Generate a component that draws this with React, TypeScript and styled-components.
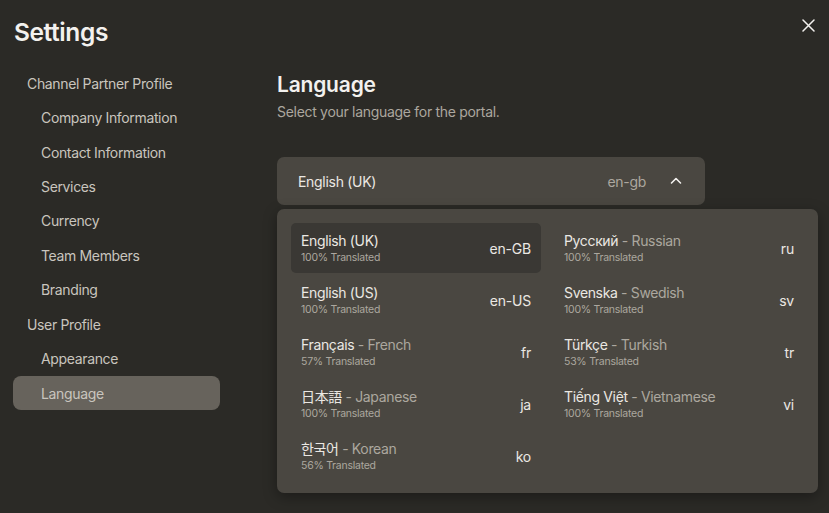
import React from "react";
import styled, { createGlobalStyle } from "styled-components";

const GlobalStyle = createGlobalStyle`
  html, body {
    margin: 0;
    padding: 0;
    background: #2b2a26;
  }
  * {
    box-sizing: border-box;
  }
`;

const Page = styled.div`
  width: 829px;
  height: 513px;
  overflow: hidden;
  background-color: #2b2a26;
  font-family: "Inter", "Noto Sans CJK JP", sans-serif;
  color: #e9e6e1;
  display: flex;
  flex-direction: column;
`;

const Header = styled.div`
  display: flex;
  justify-content: space-between;
  align-items: center;
  padding: 14px 13px 0 14px;
  height: 50px;
`;

const Title = styled.h1`
  margin: 0;
  font-size: 24.5px;
  font-weight: 600;
  color: #f3f1ee;
  letter-spacing: -0.4px;
`;

const CloseButton = styled.button`
  width: 16px;
  height: 16px;
  padding: 0;
  margin-top: -13px;
  border: none;
  background: none;
  display: flex;
  align-items: center;
  justify-content: center;
  cursor: pointer;
`;

const Body = styled.div`
  display: flex;
  gap: 57px;
  padding-left: 13px;
  flex: 1;
`;

const Sidebar = styled.ul`
  list-style: none;
  margin: 16px 0 0;
  padding: 0;
  width: 207px;
  flex-shrink: 0;
`;

const NavItem = styled.li<{ $sub?: boolean; $active?: boolean }>`
  height: 34.45px;
  display: flex;
  align-items: center;
  padding-left: ${(p) => (p.$sub ? "28px" : "14px")};
  font-size: 14px;
  color: #c9c5be;
  border-radius: 8px;
  background-color: ${(p) => (p.$active ? "#67635c" : "transparent")};
  letter-spacing: -0.35px;
`;

const Main = styled.main`
  flex: 1;
  padding-right: 12px;
  padding-top: 20px;
`;

const Heading = styled.h2`
  margin: 0;
  font-size: 21px;
  font-weight: 600;
  color: #f3f1ee;
  line-height: 30px;
  letter-spacing: -0.2px;
`;

const Subtitle = styled.p`
  margin: 3px 0 0;
  font-size: 14px;
  color: #aca79f;
  line-height: 18px;
  letter-spacing: -0.3px;
`;

const Select = styled.div`
  margin-top: 36px;
  width: 428px;
  height: 48px;
  border-radius: 7px;
  background-color: #4a4741;
  display: flex;
  align-items: center;
  padding: 0 22px 0 21px;
  font-size: 14px;
  letter-spacing: -0.3px;
`;

const SelectValue = styled.span`
  flex: 1;
  color: #ebe8e3;
`;

const SelectCode = styled.span`
  color: #aca79f;
  margin-right: 23px;
`;

const Dropdown = styled.div`
  margin-top: 4px;
  height: 284px;
  border-radius: 7px;
  background-color: #4a4741;
  box-shadow: 0 4px 14px rgba(0, 0, 0, 0.35);
  padding: 14px;
  display: grid;
  grid-template-columns: 250px 250px;
  grid-auto-flow: column;
  grid-template-rows: repeat(5, 50px);
  column-gap: 13px;
  row-gap: 2px;
`;

const Option = styled.div<{ $selected?: boolean }>`
  display: flex;
  align-items: center;
  justify-content: space-between;
  padding: 0 10px;
  border-radius: 5px;
  background-color: ${(p) => (p.$selected ? "#3a3834" : "transparent")};
`;

const OptionText = styled.div`
  display: flex;
  flex-direction: column;
  gap: 1px;
`;

const OptionName = styled.span`
  font-size: 14px;
  line-height: 18px;
  color: #ebe8e3;
  letter-spacing: -0.35px;
`;

const EnglishName = styled.span`
  color: #aca79f;
`;

const Progress = styled.span`
  font-size: 10.5px;
  line-height: 14px;
  color: #aca79f;
  letter-spacing: -0.25px;
`;

const Code = styled.span`
  font-size: 14px;
  color: #ebe8e3;
  letter-spacing: -0.2px;
`;

const nav = [
  { label: "Channel Partner Profile" },
  { label: "Company Information", sub: true },
  { label: "Contact Information", sub: true },
  { label: "Services", sub: true },
  { label: "Currency", sub: true },
  { label: "Team Members", sub: true },
  { label: "Branding", sub: true },
  { label: "User Profile" },
  { label: "Appearance", sub: true },
  { label: "Language", sub: true, active: true },
];

const languages = [
  { name: "English (UK)", progress: "100%", code: "en-GB", selected: true },
  { name: "English (US)", progress: "100%", code: "en-US" },
  { name: "Français", english: "French", progress: "57%", code: "fr" },
  { name: "日本語", english: "Japanese", progress: "100%", code: "ja" },
  { name: "한국어", english: "Korean", progress: "56%", code: "ko" },
  { name: "Русский", english: "Russian", progress: "100%", code: "ru" },
  { name: "Svenska", english: "Swedish", progress: "100%", code: "sv" },
  { name: "Türkçe", english: "Turkish", progress: "53%", code: "tr" },
  { name: "Tiếng Việt", english: "Vietnamese", progress: "100%", code: "vi" },
];

export default function App() {
  return (
    <Page>
      <GlobalStyle />
      <Header>
        <Title>Settings</Title>
        <CloseButton aria-label="Close">
          <svg width="13" height="13" viewBox="0 0 13 13" fill="none">
            <path d="M1 1L12 12M12 1L1 12" stroke="#f3f1ee" strokeWidth="1.5" strokeLinecap="round" />
          </svg>
        </CloseButton>
      </Header>
      <Body>
        <Sidebar>
          {nav.map((n) => (
            <NavItem key={n.label} $sub={n.sub} $active={n.active}>
              {n.label}
            </NavItem>
          ))}
        </Sidebar>
        <Main>
          <Heading>Language</Heading>
          <Subtitle>Select your language for the portal.</Subtitle>
          <Select>
            <SelectValue>English (UK)</SelectValue>
            <SelectCode>en-gb</SelectCode>
            <svg width="14" height="14" viewBox="0 0 14 14" fill="none">
              <path d="M2.5 9L7 4.5L11.5 9" stroke="#f3f1ee" strokeWidth="1.6" strokeLinecap="round" strokeLinejoin="round" />
            </svg>
          </Select>
          <Dropdown>
            {languages.map((l) => (
              <Option key={l.code} $selected={l.selected}>
                <OptionText>
                  <OptionName>
                    {l.name}
                    {l.english && <EnglishName> - {l.english}</EnglishName>}
                  </OptionName>
                  <Progress>{l.progress} Translated</Progress>
                </OptionText>
                <Code>{l.code}</Code>
              </Option>
            ))}
          </Dropdown>
        </Main>
      </Body>
    </Page>
  );
}
